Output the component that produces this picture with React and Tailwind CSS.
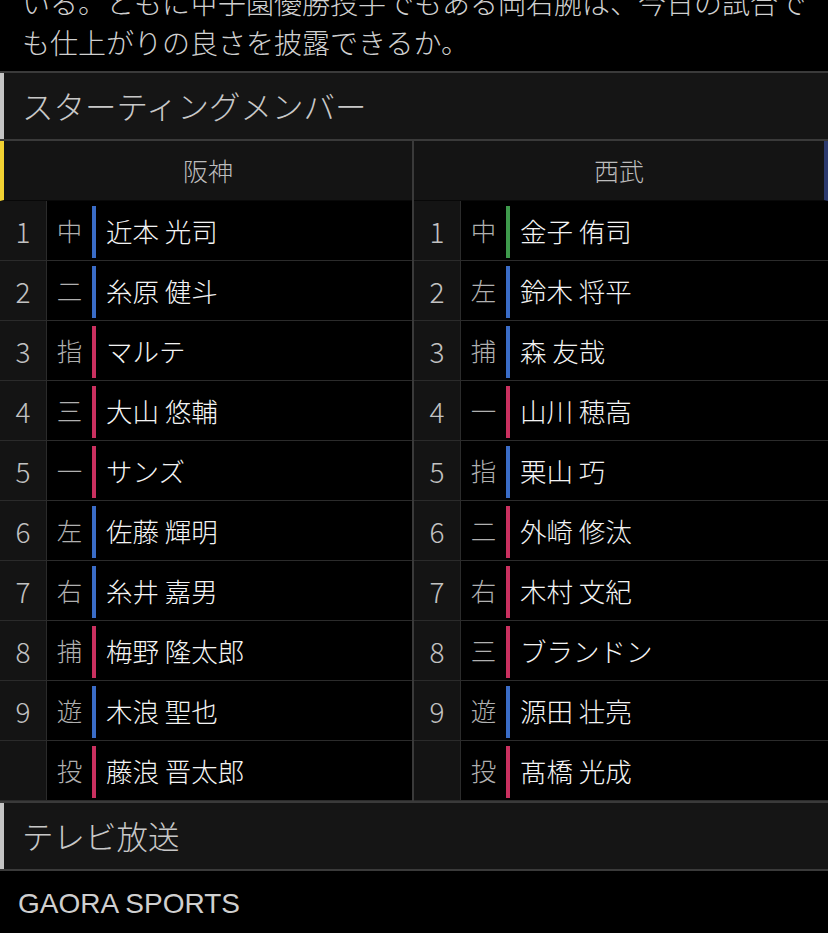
const BLUE = 'bg-[#3a6cc6]';
const PINK = 'bg-[#c9305f]';
const GREEN = 'bg-[#3e9a4c]';

const hanshin = [
  { no: '1', pos: '中', name: '近本 光司', bar: BLUE },
  { no: '2', pos: '二', name: '糸原 健斗', bar: BLUE },
  { no: '3', pos: '指', name: 'マルテ', bar: PINK },
  { no: '4', pos: '三', name: '大山 悠輔', bar: PINK },
  { no: '5', pos: '一', name: 'サンズ', bar: PINK },
  { no: '6', pos: '左', name: '佐藤 輝明', bar: BLUE },
  { no: '7', pos: '右', name: '糸井 嘉男', bar: BLUE },
  { no: '8', pos: '捕', name: '梅野 隆太郎', bar: PINK },
  { no: '9', pos: '遊', name: '木浪 聖也', bar: BLUE },
  { no: '', pos: '投', name: '藤浪 晋太郎', bar: PINK },
];

const seibu = [
  { no: '1', pos: '中', name: '金子 侑司', bar: GREEN },
  { no: '2', pos: '左', name: '鈴木 将平', bar: BLUE },
  { no: '3', pos: '捕', name: '森 友哉', bar: BLUE },
  { no: '4', pos: '一', name: '山川 穂高', bar: PINK },
  { no: '5', pos: '指', name: '栗山 巧', bar: BLUE },
  { no: '6', pos: '二', name: '外崎 修汰', bar: PINK },
  { no: '7', pos: '右', name: '木村 文紀', bar: PINK },
  { no: '8', pos: '三', name: 'ブランドン', bar: PINK },
  { no: '9', pos: '遊', name: '源田 壮亮', bar: BLUE },
  { no: '', pos: '投', name: '髙橋 光成', bar: PINK },
];

const PlayerRow = ({ p }) => (
  <div className="flex h-[60px] border-b border-[#2b2b2b]">
    <div className="w-[47px] shrink-0 bg-[#141414] border-r border-[#2b2b2b] flex items-center justify-center text-[28px] font-light text-[#c2c2c2]">
      {p.no}
    </div>
    <div className="w-[45px] shrink-0 flex items-center justify-center text-[25.5px] font-light text-[#b0b0b0]">
      {p.pos}
    </div>
    <div className={`w-[4px] shrink-0 mt-[5px] mb-[2px] ${p.bar}`} />
    <div className="flex items-center pl-[10px] text-[26.5px] font-light text-[#f4f4f4] whitespace-nowrap">
      {p.name}
    </div>
  </div>
);

const SectionHeader = ({ title }) => (
  <div className="border-y-2 border-[#3a3a3a] bg-[#151515]">
    <div className="h-[66px] border-l-4 border-[#c4c4c4] flex items-center pl-[18px] text-[31.5px] font-light text-[#c8c8c8]">
      {title}
    </div>
  </div>
);

const App = () => {
  return (
    <div className="w-[828px] h-[933px] overflow-hidden bg-black font-['Noto_Sans_CJK_JP',sans-serif]">
      <div className="pl-[22px] pb-[9px]">
        <p className="mt-[-18px] text-[28px] leading-[40px] font-light text-[#d0d0d0] whitespace-nowrap">
          いる。ともに甲子園優勝投手でもある岡右腕は、今日の試合で
          <br />
          も仕上がりの良さを披露できるか。
        </p>
      </div>

      <SectionHeader title="スターティングメンバー" />

      <div className="grid grid-cols-2">
        <div className="border-r-2 border-[#3a3a3a]">
          <div className="h-[60px] bg-[#141414] border-l-4 border-[#f2d232] border-b border-b-[#080808] flex items-center justify-center text-[25px] font-light text-[#bdbdbd]">
            阪神
          </div>
          {hanshin.map((p, i) => (
            <PlayerRow key={i} p={p} />
          ))}
        </div>
        <div>
          <div className="h-[60px] bg-[#141414] border-r-4 border-[#2c3a6e] border-b border-b-[#080808] flex items-center justify-center text-[25px] font-light text-[#bdbdbd]">
            西武
          </div>
          {seibu.map((p, i) => (
            <PlayerRow key={i} p={p} />
          ))}
        </div>
      </div>

      <SectionHeader title="テレビ放送" />

      <div className="h-[62px] flex items-center pl-[18px] pt-[3px] text-[28px] text-[#cfcfcf] font-['Liberation_Sans',sans-serif]">
        GAORA SPORTS
      </div>
    </div>
  );
};

export default App;
